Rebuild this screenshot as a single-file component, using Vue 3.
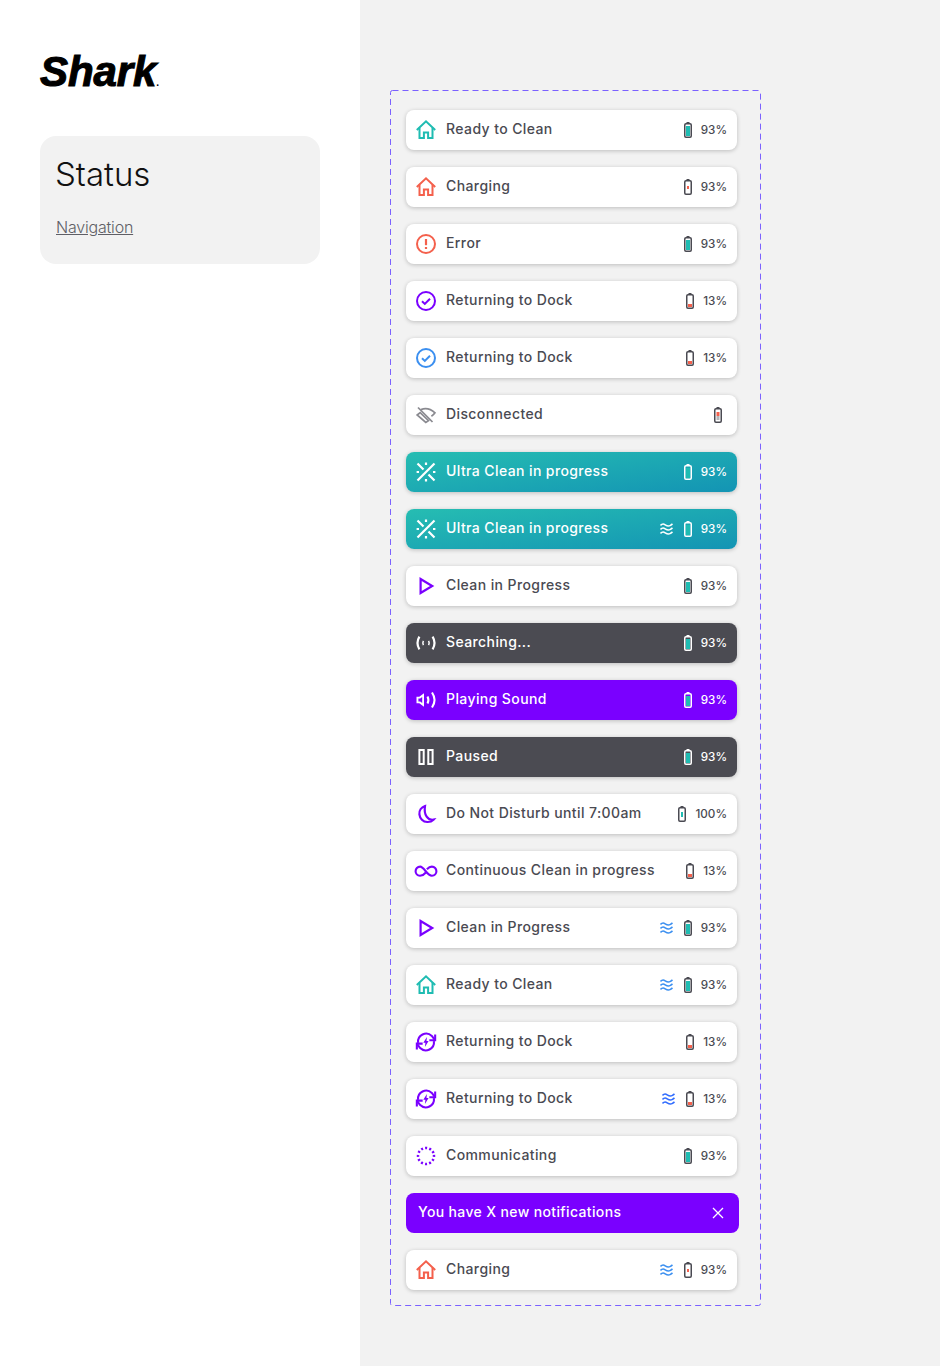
<script setup>
const rows = [
  { icon: 'home', tone: 'teal', label: 'Ready to Clean', pct: '93%', fill: 'high' },
  { icon: 'home', tone: 'red', label: 'Charging', pct: '93%', fill: 'charge' },
  { icon: 'error', tone: 'red', label: 'Error', pct: '93%', fill: 'high' },
  { icon: 'check', tone: 'purple', label: 'Returning to Dock', pct: '13%', fill: 'low' },
  { icon: 'check', tone: 'blue', label: 'Returning to Dock', pct: '13%', fill: 'low' },
  { icon: 'offline', tone: 'grey', label: 'Disconnected', pct: '', fill: 'off' },
  { icon: 'ultra', tone: 'white', label: 'Ultra Clean in progress', pct: '93%', fill: 'high', bg: 'gradient' },
  { icon: 'ultra', tone: 'white', label: 'Ultra Clean in progress', pct: '93%', fill: 'high', bg: 'gradient', waves: true },
  { icon: 'play', tone: 'purple', label: 'Clean in Progress', pct: '93%', fill: 'high' },
  { icon: 'search', tone: 'white', label: 'Searching...', pct: '93%', fill: 'high', bg: 'dark' },
  { icon: 'sound', tone: 'white', label: 'Playing Sound', pct: '93%', fill: 'high', bg: 'violet' },
  { icon: 'pause', tone: 'white', label: 'Paused', pct: '93%', fill: 'high', bg: 'dark' },
  { icon: 'moon', tone: 'purple', label: 'Do Not Disturb until 7:00am', pct: '100%', fill: 'full' },
  { icon: 'infinity', tone: 'purple', label: 'Continuous Clean in progress', pct: '13%', fill: 'low' },
  { icon: 'play', tone: 'purple', label: 'Clean in Progress', pct: '93%', fill: 'high', waves: true },
  { icon: 'home', tone: 'teal', label: 'Ready to Clean', pct: '93%', fill: 'high', waves: true },
  { icon: 'sync', tone: 'purple', label: 'Returning to Dock', pct: '13%', fill: 'low' },
  { icon: 'sync', tone: 'purple', label: 'Returning to Dock', pct: '13%', fill: 'low', waves: true, wavesTone: 'bluer' },
  { icon: 'spinner', tone: 'purple', label: 'Communicating', pct: '93%', fill: 'high' },
  { notice: true, label: 'You have X new notifications' },
  { icon: 'home', tone: 'red', label: 'Charging', pct: '93%', fill: 'charge', waves: true },
]
</script>

<template>
  <main class="page">
    <aside class="side">
      <div class="logo">Shark<span class="tm">.</span></div>
      <section class="card">
        <h1>Status</h1>
        <a class="nav">Navigation</a>
      </section>
    </aside>
    <div class="stage">
      <div class="frame">
        <svg class="dash" width="371" height="1216"><rect x=".5" y=".5" width="370" height="1215" rx="2" /></svg>
        <template v-for="(r, i) in rows" :key="i">
          <div v-if="r.notice" class="notice">
            <span class="notice-text">{{ r.label }}</span>
            <svg class="close" viewBox="0 0 12 12" width="12" height="12"><path d="M1 1l10 10M11 1L1 11" /></svg>
          </div>
          <div v-else class="row" :class="r.bg">
            <svg class="icon" :class="r.tone" viewBox="0 0 20 20" width="20" height="20">
              <g v-if="r.icon === 'home'" class="line" stroke-width="2">
                <path d="M.8 10L10 1.300l9.200 8.700" />
                <path d="M3.500 7.800V18h4.400v-5.600h4.200V18h4.400V7.800" />
              </g>
              <g v-else-if="r.icon === 'error'" class="line" stroke-width="2">
                <circle cx="10" cy="10" r="9" />
                <path d="M10 5v6.200" stroke-width="2.200" />
                <path d="M10 13v2" stroke-width="2.200" />
              </g>
              <g v-else-if="r.icon === 'check'" class="line" stroke-width="2">
                <circle cx="10" cy="10" r="9" />
                <path d="M6 10.300l2.800 2.600 5.200-5.200" />
              </g>
              <g v-else-if="r.icon === 'offline'" class="line" stroke-width="1.700">
                <path d="M5 4.600C9 3 14.500 3.800 19 7.800c-1 1.400-2.200 2.500-3.600 3.400" />
                <path d="M1.200 10l3-2.300 8.300 8-2.700 1.700z" />
                <path d="M2 2.500l14.500 14.500" />
              </g>
              <g v-else-if="r.icon === 'ultra'" class="line" stroke-width="2.200">
                <path d="M1.500 1.500l6 6M12.500 12.500l6 6M18.500 1.500l-17 17" />
                <path d="M10 .6v2.400M10 17v2.400M.6 10H3M17 10h2.400M6.400 11.200l-.1.100M13.600 8.800l.1-.1" />
              </g>
              <path v-else-if="r.icon === 'play'" class="line" stroke-width="2.200" d="M4.600 3v14L16.200 10z" />
              <g v-else-if="r.icon === 'search'" class="line" stroke-width="2.200">
                <path d="M3.400 3.600c-2.400 4-2.400 8.800 0 12.800" />
                <path d="M16.600 3.600c2.400 4 2.400 8.800 0 12.800" />
                <path d="M7.400 7.800c-.8 1.500-.8 2.900 0 4.400" stroke-width="1.500" />
                <path d="M12.600 7.800c.8 1.500.8 2.900 0 4.400" stroke-width="1.500" />
              </g>
              <g v-else-if="r.icon === 'sound'">
                <path class="solid" d="M.5 6.800h2.800L8 3.200v13.600l-4.700-3.600H.5zM2.400 8.600v2.800h1.800l2 1.500V7.100l-2 1.500z" fill-rule="evenodd" />
                <path class="line" stroke-width="2.100" d="M11.500 6.500c1.200 2.300 1.200 4.700 0 7M16 2.500c3.200 4.700 3.200 10.300 0 15" />
              </g>
              <g v-else-if="r.icon === 'pause'" class="line" stroke-width="2">
                <rect x="3.400" y="3" width="4.300" height="14" />
                <rect x="12.300" y="3" width="4.300" height="14" />
              </g>
              <path v-else-if="r.icon === 'moon'" class="line" stroke-width="2.200" d="M9 2c-3.600 1.200-6 4.600-5.600 8.400.4 4.100 3.700 7.400 7.800 7.600 2.300.1 4.700-.6 6.300-2.300-5.400.9-10-4.300-8.500-13.700z" />
              <path v-else-if="r.icon === 'infinity'" class="line inf" stroke-width="2.100" d="M9.600 11.700C8 13.600 6.200 14.700 4 14.700 1.300 14.700-.4 12.600-.4 10.200-.4 7.700 1.500 5.600 4.200 5.600c3.900 0 6.700 9.100 11.700 9.100 2.800 0 4.500-2 4.500-4.500 0-2.600-1.900-4.600-4.500-4.600-1.900 0-3.400 1-5 2.700" />
              <g v-else-if="r.icon === 'sync'">
                <g class="line" stroke-width="2.500" transform="scale(.833)">
                  <path d="M23 3v7h-7" />
                  <path d="M1 21v-7h7" />
                  <path d="M2.500 13A9.800 9.800 0 0 1 19 4.700L23 10" />
                  <path d="M1 14l4 5.300A9.800 9.800 0 0 0 21.500 11" />
                </g>
                <path class="solid" d="M10.900 5L7.300 10.700h2.100L8.900 15l3.700-6h-2.100z" />
              </g>
              <circle v-else-if="r.icon === 'spinner'" class="line" stroke-width="2.500" cx="10" cy="10" r="8" stroke-dasharray="2 2.190" transform="rotate(-8 10 10)" />
            </svg>
            <span class="label">{{ r.label }}</span>
            <div class="meta" :class="{ bare: !r.pct }">
              <svg v-if="r.waves" class="waves" :class="r.wavesTone" viewBox="0 0 13 12" width="13" height="12">
                <path d="M.5 2.400C2 .8 3.700.8 5.200 1.800s3.300 1.600 4.800.8c1-.5 1.800-1 2.500-1.700" />
                <path d="M.5 6.400C2 4.800 3.700 4.800 5.200 5.800s3.300 1.600 4.800.8c1-.5 1.800-1 2.500-1.700" />
                <path d="M.5 10.400C2 8.800 3.700 8.800 5.200 9.800s3.300 1.600 4.800.8c1-.5 1.800-1 2.500-1.700" />
              </svg>
              <svg class="batt" :class="r.fill" viewBox="0 0 8 16" width="8" height="16">
                <rect class="level" />
                <rect v-if="r.fill === 'off'" class="rest" x="2.500" y="9" width="3" height="4" />
                <rect class="cap" x="2.500" y="0" width="3" height="2" />
                <rect class="shell" x=".75" y="1.750" width="6.500" height="13.500" rx="1.200" />
              </svg>
              <span v-if="r.pct" class="pct">{{ r.pct }}</span>
            </div>
          </div>
        </template>
      </div>
    </div>
  </main>
</template>

<style scoped>
.page { display: flex; width: 940px; min-height: 1366px; background: #f2f2f2; }
.side { width: 360px; background: #fff; padding: 49px 40px 0; box-sizing: border-box; }
.logo {
  height: 47px; font: italic 700 42px/45px "Liberation Sans", sans-serif; color: #000;
  letter-spacing: -.1px; -webkit-text-stroke: 1.100px #000; white-space: nowrap;
}
.tm { font-size: 10px; letter-spacing: 0; -webkit-text-stroke: 0; font-style: normal; }
.card { margin-top: 40px; height: 128px; box-sizing: border-box; background: #f2f2f2; border-radius: 16px; padding: 17px 16px 0; }
h1 { margin: 0 0 0 -1px; font: 300 33px/42px "Inter", sans-serif; color: #111; }
.nav { display: inline-block; margin-top: 21px; font: 300 16px/22px "Inter", sans-serif; color: #5f5f66; text-decoration: underline; letter-spacing: -.2px; }
.stage { padding: 90px 0 0 30px; }
.frame {
  position: relative; width: 371px; height: 1216px; box-sizing: border-box;
  padding: 20px 22px 16px 16px; display: flex; flex-direction: column; gap: 17px;
}
.dash { position: absolute; left: 0; top: 0; }
.dash rect { fill: none; stroke: #7b61ff; stroke-width: 1; stroke-dasharray: 6 4; }
.row {
  width: 331px; height: 40px; flex: none; box-sizing: border-box; display: flex; align-items: center;
  padding: 0 10px; background: #fff; border-radius: 8px; color: #4a4a52;
  box-shadow: 0 1px 4px rgba(0, 0, 0, .22);
}
.row.gradient { background: linear-gradient(172deg, #26bdb2, #1394b4); color: #fff; }
.row.dark { background: #4b4b52; color: #fff; }
.row.violet { background: #7a00ff; color: #fff; }
.label { margin-left: 10px; margin-top: -2px; font: 500 14px/20px "Inter", sans-serif; letter-spacing: .4px; white-space: nowrap; }
.icon { flex: none; overflow: visible; }
.line { fill: none; stroke: currentColor; }
.solid { fill: currentColor; }
.teal { color: #1fbcb2; }
.red { color: #f4604c; }
.purple { color: #7a00ff; }
.blue { color: #3b8ff0; }
.grey { color: #8a8a90; }
.white { color: #fff; }
.meta { margin-left: auto; display: flex; align-items: center; }
.meta.bare { margin-right: 5px; }
.waves { fill: none; stroke: #3b8ff0; stroke-width: 1.500; margin-right: 11px; }
.waves.bluer { stroke: #2f6bff; }
.gradient .waves { stroke: #fff; }
.batt { display: block; }
.cap { fill: #4a4a52; }
.shell { fill: none; stroke: #4a4a52; stroke-width: 1.500; }
.gradient .cap, .dark .cap, .violet .cap { fill: #fff; }
.gradient .shell, .dark .shell, .violet .shell { stroke: #fff; }
.level { x: 2px; width: 4px; }
.high .level { y: 4px; height: 10px; fill: #1fbcb2; }
.charge .level { y: 7px; height: 3px; fill: #f4604c; x: 3px; width: 2px; }
.low .level { y: 11px; height: 3px; fill: #f4604c; }
.off .level { y: 5px; height: 4px; fill: #f4604c; x: 2.500px; width: 3px; }
.full .level { y: 6px; height: 5px; fill: #1fbcb2; x: 3px; width: 2px; }
.rest { fill: #b5b5b9; }
.pct { margin-left: 9px; font: 500 11.700px/16px "Inter", sans-serif; white-space: nowrap; }
.notice {
  width: 333px; height: 40px; flex: none; box-sizing: border-box; display: flex; align-items: center; justify-content: space-between;
  padding: 0 15px 0 12px; background: #7a00ff; color: #fff; border-radius: 8px;
}
.notice-text { margin-top: -2px; font: 500 14px/20px "Inter", sans-serif; letter-spacing: .36px; }
.close { fill: none; stroke: #fff; stroke-width: 1.300; }
</style>
